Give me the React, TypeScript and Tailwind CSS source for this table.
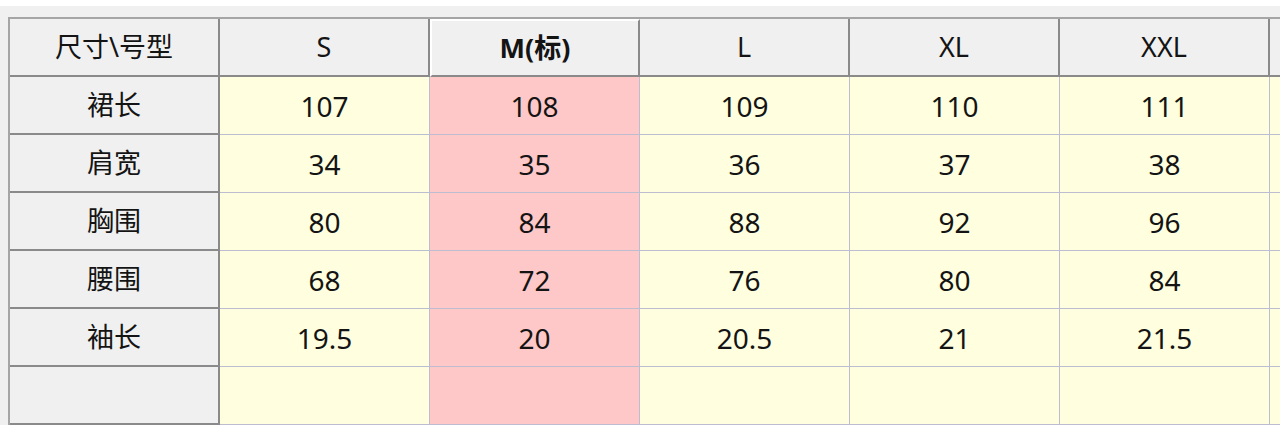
const sizes = ["S", "M(标)", "L", "XL", "XXL", ""];

const rows: { label: string; values: string[] }[] = [
  { label: "裙长", values: ["107", "108", "109", "110", "111", ""] },
  { label: "肩宽", values: ["34", "35", "36", "37", "38", ""] },
  { label: "胸围", values: ["80", "84", "88", "92", "96", ""] },
  { label: "腰围", values: ["68", "72", "76", "80", "84", ""] },
  { label: "袖长", values: ["19.5", "20", "20.5", "21", "21.5", ""] },
  { label: "", values: ["", "", "", "", "", ""] },
];

const font = {
  fontFamily: '"Noto Sans", "Noto Sans CJK SC", sans-serif',
};

export default function App() {
  return (
    <div
      className="h-[425px] w-[1280px] overflow-hidden bg-[#f0f0f0] text-[#141414]"
      style={font}
    >
      <div className="h-[6px] bg-white" />
      <div className="ml-[8px] mt-[11px] w-[1500px] border-l-2 border-t-2 border-[#a5a5a5]">
        <div className="grid grid-cols-[210px_210px_210px_210px_210px_210px_210px]">
          <div className="flex h-[58px] items-center justify-center border-b-2 border-r-2 border-[#8a8a8a] bg-[#f0f0f0] text-[27px]">
            尺寸\号型
          </div>
          {sizes.map((s, i) =>
            i === 1 ? (
              <div
                key={i}
                className="flex h-[58px] items-center justify-center border-2 border-b-[#8a8a8a] border-l-white border-r-[#8a8a8a] border-t-white bg-[#f0f0f0] text-[27px] font-bold"
              >
                {s}
              </div>
            ) : (
              <div
                key={i}
                className="flex h-[58px] items-center justify-center border-b-2 border-r-2 border-[#8a8a8a] bg-[#f0f0f0] text-[27px]"
              >
                {s}
              </div>
            )
          )}
          {rows.map((row, r) => [
            <div
              key={`l${r}`}
              className="flex h-[58px] items-center justify-center border-b-2 border-r-2 border-[#8a8a8a] bg-[#f0f0f0] text-[27px]"
            >
              {row.label}
            </div>,
            ...row.values.map((v, i) => (
              <div
                key={`${r}-${i}`}
                className={`flex h-[58px] items-center justify-center border-b border-r border-[#bdbdd2] text-[28px] ${
                  i === 1 ? "bg-[#ffc8c8]" : "bg-[#ffffe0]"
                }`}
              >
                {v}
              </div>
            )),
          ])}
        </div>
      </div>
    </div>
  );
}
